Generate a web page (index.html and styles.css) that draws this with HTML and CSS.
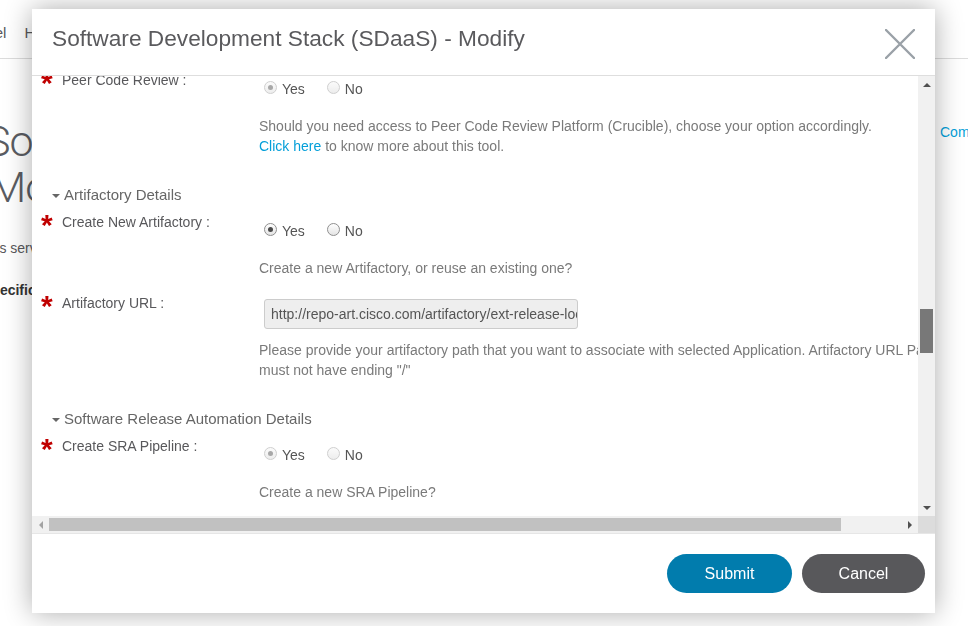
FILE: index.html
```html
<!DOCTYPE html>
<html lang="en">
<head>
<meta charset="utf-8">
<title>SDaaS - Modify</title>
<link rel="stylesheet" href="styles.css">
</head>
<body>
<div class="page">
  <nav class="nav">
    <span class="nav-item">Panel</span>
    <span class="nav-item">Help</span>
  </nav>
  <div class="hero">
    <div class="hero-main">
      <h1 class="hero-title"><span class="hero-line first">Software Development Stack (SDaaS)</span><span class="hero-line">Modify Service</span></h1>
      <p class="hero-desc">This service lets you modify your stack</p>
      <h3 class="hero-sub">Specifications</h3>
    </div>
    <div class="hero-aside"><a class="hero-link">Comments</a></div>
  </div>
</div>

<div class="overlay">
  <div class="modal">
    <div class="modal-header">
      <h2 class="modal-title">Software Development Stack (SDaaS) - Modify</h2>
      <span class="close">
        <svg width="30" height="30" viewBox="0 0 30 30"><path d="M1 1 L29 29 M29 1 L1 29" stroke="#9aa1a7" stroke-width="2.4" stroke-linecap="round" fill="none"/></svg>
      </span>
    </div>

    <div class="modal-body">
      <div class="viewport">
        <div class="content">
          <div class="row">
            <div class="label"><span class="req">*</span><span>Peer Code Review :</span></div>
            <div class="field">
              <div class="radios">
                <label class="opt"><span class="radio disabled checked"></span>Yes</label>
                <label class="opt"><span class="radio disabled"></span>No</label>
              </div>
              <p class="help">Should you need access to Peer Code Review Platform (Crucible), choose your option accordingly.<br><a class="link">Click here</a> to know more about this tool.</p>
            </div>
          </div>

          <div class="section"><span class="caret"></span>Artifactory Details</div>

          <div class="row">
            <div class="label"><span class="req">*</span><span>Create New Artifactory :</span></div>
            <div class="field">
              <div class="radios">
                <label class="opt"><span class="radio checked"></span>Yes</label>
                <label class="opt"><span class="radio"></span>No</label>
              </div>
              <p class="help">Create a new Artifactory, or reuse an existing one?</p>
            </div>
          </div>

          <div class="row">
            <div class="label"><span class="req">*</span><span>Artifactory URL :</span></div>
            <div class="field">
              <div class="textbox"><span class="textbox-val">http://repo-art.cisco.com/artifactory/ext-release-local</span></div>
              <p class="help help-input">Please provide your artifactory path that you want to associate with selected Application. Artifactory URL Path must not have ending "/"</p>
            </div>
          </div>

          <div class="section"><span class="caret"></span>Software Release Automation Details</div>

          <div class="row">
            <div class="label"><span class="req">*</span><span>Create SRA Pipeline :</span></div>
            <div class="field">
              <div class="radios">
                <label class="opt"><span class="radio disabled checked"></span>Yes</label>
                <label class="opt"><span class="radio disabled"></span>No</label>
              </div>
              <p class="help">Create a new SRA Pipeline?</p>
            </div>
          </div>
        </div>
      </div>

      <div class="vbar">
        <span class="sb-btn"><span class="arr up"></span></span>
        <div class="vtrack"><div class="vthumb"></div></div>
        <span class="sb-btn"><span class="arr down"></span></span>
      </div>
      <div class="hbar">
        <span class="sb-btn"><span class="arr left"></span></span>
        <div class="htrack"><div class="hthumb"></div></div>
        <span class="sb-btn"><span class="arr right"></span></span>
      </div>
      <div class="corner"></div>
    </div>

    <div class="modal-footer">
      <button class="btn btn-primary">Submit</button>
      <button class="btn btn-secondary">Cancel</button>
    </div>
  </div>
</div>
</body>
</html>
```

FILE: styles.css
```css
* { box-sizing: border-box; }

html, body {
  margin: 0;
  height: 100%;
  overflow: hidden;
}

body {
  font-family: "Liberation Sans", Arial, sans-serif;
  font-size: 14px;
  color: #58585b;
  background: #fff;
}

/* ---------- background page ---------- */
.nav {
  height: 59px;
  border-bottom: 1px solid #dcdcdc;
  display: flex;
  align-items: center;
  gap: 18px;
  padding-top: 6px;
  margin-left: -32px;
  font-size: 15px;
  color: #58585b;
}

.hero {
  display: grid;
  grid-template-columns: 940px 1fr;
}

.hero-main {
  padding-top: 59px;
}

.hero-title {
  margin: 0;
  font-family: Roboto, Lato, sans-serif;
  font-weight: 300;
  font-size: 43px;
  line-height: 46px;
  letter-spacing: -1px;
  color: #5a5c62;
  white-space: nowrap;
}

.hero-line { display: block; margin-left: -11px; }
.hero-line.first { margin-left: -15px; }

.hero-desc {
  margin: 28px 0 0 -20px;
  line-height: 20px;
  white-space: nowrap;
}

.hero-sub {
  margin: 22px 0 0 -18px;
  font-size: 14px;
  line-height: 20px;
  color: #333;
  font-weight: bold;
  white-space: nowrap;
}

.hero-aside {
  padding-top: 63px;
  white-space: nowrap;
}

.hero-link {
  color: #049fd9;
  line-height: 20px;
}

/* ---------- overlay / modal ---------- */
.overlay {
  position: fixed;
  inset: 0;
  padding: 9px 0 0 32px;
}

.modal {
  width: 903px;
  height: 604px;
  background: #fff;
  display: flex;
  flex-direction: column;
  box-shadow: 0 0 26px rgba(0, 0, 0, 0.33);
}

.modal-header {
  height: 67px;
  flex: none;
  border-bottom: 1px solid #dedede;
  display: flex;
  align-items: center;
  justify-content: space-between;
  padding: 0 20px;
}

.modal-title {
  margin: 0 0 7px 0;
  font-weight: normal;
  font-size: 22.7px;
  color: #5a5a5d;
}

.close {
  display: block;
  width: 30px;
  height: 30px;
  margin-top: 3px;
}

.close svg { display: block; }

.modal-body {
  flex: 1;
  min-height: 0;
  display: grid;
  grid-template-columns: 1fr 17px;
  grid-template-rows: 1fr 17px;
}

.viewport {
  overflow: hidden;
  min-width: 0;
  min-height: 0;
}

.content {
  width: 963px;
  margin-top: -6px;
  padding-left: 9px;
  display: flex;
  flex-direction: column;
}

.row {
  display: grid;
  grid-template-columns: 218px 700px;
  margin-bottom: 15px;
}

.label {
  display: flex;
  align-items: flex-start;
  line-height: 20px;
  color: #58585b;
}

.req {
  width: 21px;
  flex: none;
  color: #c00000;
  font-weight: bold;
  font-size: 30px;
  line-height: 26px;
  height: 20px;
  overflow: visible;
}

.field {
  padding-top: 9px;
}

.radios {
  display: flex;
  line-height: 20px;
  color: #555;
}

.opt {
  display: flex;
  align-items: flex-start;
  margin-right: 17px;
}

.radio {
  width: 13px;
  height: 13px;
  margin: 2px 5px 0 5px;
  border-radius: 50%;
  border: 1px solid #8f8f8f;
  background: linear-gradient(#ffffff, #e4e4e4);
  display: flex;
  align-items: center;
  justify-content: center;
}

.radio.checked::after {
  content: "";
  width: 5px;
  height: 5px;
  border-radius: 50%;
  background: #4a4a4a;
}

.radio.disabled {
  border-color: #cfcfcf;
  background: linear-gradient(#fbfbfb, #ededed);
}

.radio.disabled.checked::after {
  background: #a8a8a8;
}

.help {
  margin: 17px 0 0 0;
  line-height: 20px;
  color: #7a7a7a;
}

.help-input {
  margin-top: 11px;
}

.link {
  color: #049fd9;
}

.textbox {
  margin: -3px 0 0 5px;
  width: 314px;
  height: 30px;
  background: #eeeeee;
  border: 1px solid #cccccc;
  border-radius: 3px;
  padding: 0 6px;
  display: flex;
  align-items: center;
  overflow: hidden;
  white-space: nowrap;
  color: #555;
}

.section {
  display: flex;
  align-items: center;
  margin: 14px 0 7px 11px;
  font-size: 15px;
  line-height: 20px;
  color: #666;
}

.caret {
  width: 0;
  height: 0;
  border-left: 4px solid transparent;
  border-right: 4px solid transparent;
  border-top: 4px solid #666;
  margin: 2px 4px 0 0;
}

/* ---------- fake scrollbars ---------- */
.vbar {
  background: #f1f1f1;
  display: flex;
  flex-direction: column;
}

.hbar {
  background: #f1f1f1;
  display: flex;
}

.corner {
  background: #dcdcdc;
}

.sb-btn {
  width: 17px;
  height: 17px;
  flex: none;
  display: flex;
  align-items: center;
  justify-content: center;
}

.arr { width: 0; height: 0; }
.arr.up { border-left: 4px solid transparent; border-right: 4px solid transparent; border-bottom: 4px solid #505050; }
.arr.down { border-left: 4px solid transparent; border-right: 4px solid transparent; border-top: 4px solid #505050; }
.arr.left { border-top: 4px solid transparent; border-bottom: 4px solid transparent; border-right: 4px solid #a3a3a3; }
.arr.right { border-top: 4px solid transparent; border-bottom: 4px solid transparent; border-left: 4px solid #505050; }

.vtrack {
  flex: 1;
  padding: 0 2px;
}

.vthumb {
  margin-top: 216px;
  height: 44px;
  background: #787878;
}

.htrack {
  flex: 1;
  padding: 2px 0;
}

.hthumb {
  width: 792px;
  height: 100%;
  background: #c1c1c1;
}

/* ---------- footer ---------- */
.modal-footer {
  height: 80px;
  flex: none;
  border-top: 1px solid #e6e6e6;
  display: flex;
  align-items: center;
  justify-content: flex-end;
  gap: 10px;
  padding: 0 10px;
}

.btn {
  height: 39px;
  border: none;
  border-radius: 20px;
  font-family: "Liberation Sans", Arial, sans-serif;
  font-size: 16px;
  color: #fff;
}

.btn-primary {
  width: 125px;
  background: #017cad;
}

.btn-secondary {
  width: 123px;
  background: #58585b;
}
```
